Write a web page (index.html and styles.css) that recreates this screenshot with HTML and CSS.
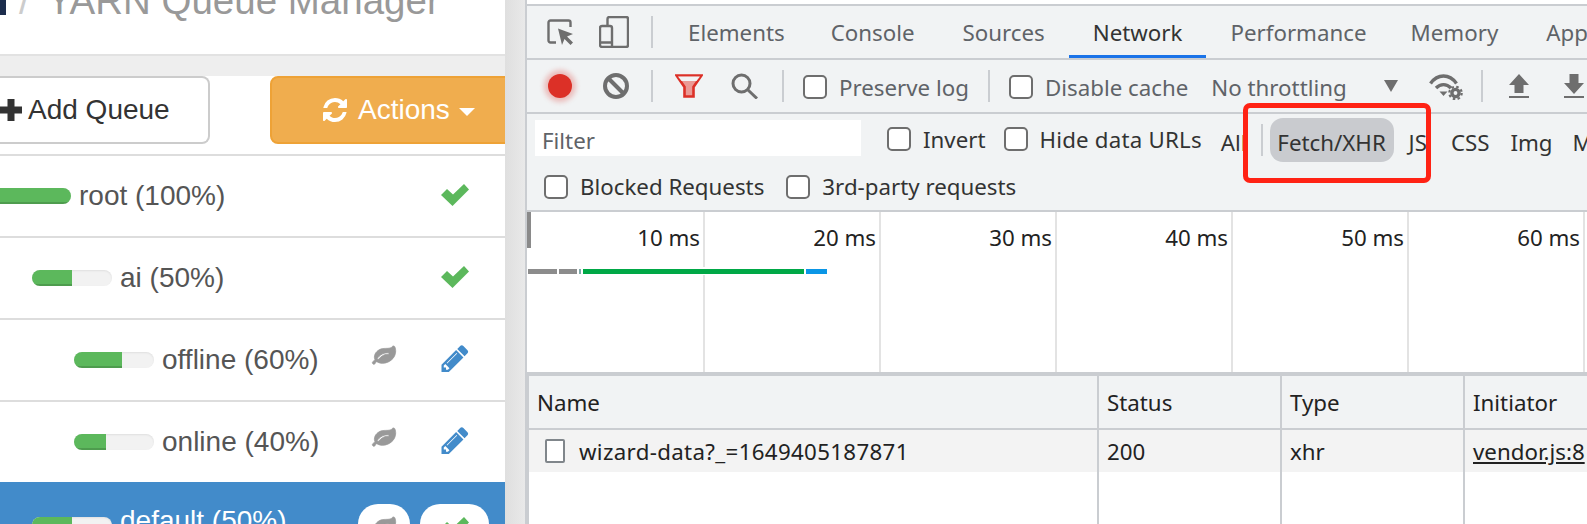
FILE: index.html
```html
<!DOCTYPE html>
<html lang="en">
<head>
<meta charset="utf-8">
<title>YARN Queue Manager</title>
<link rel="stylesheet" href="styles.css">
</head>
<body>
<div class="app">
  <section class="left">
    <header class="crumb"><span class="crumb-logo"></span><span class="crumb-sep">/</span><span class="crumb-title">YARN Queue Manager</span></header>
    <div class="band"></div>
    <div class="btns">
      <button class="btn btn-add"><svg class="plus" viewBox="0 0 22 22"><path d="M7.500 0h7v7.500h7.500v7h-7.500v7.500h-7v-7.500h-7.500v-7h7.500z"/></svg>Add Queue</button>
      <button class="btn btn-act"><svg class="refresh" viewBox="128 128 1536 1536"><path d="M1639 1056q0 5-1 7-64 268-268 434.500t-478 166.500q-146 0-282.500-55t-243.500-157l-129 129q-19 19-45 19t-45-19-19-45v-448q0-26 19-45t45-19h448q26 0 45 19t19 45-19 45l-137 137q71 66 161 102t187 36q134 0 250-65t186-179q11-17 53-117 8-23 30-23h192q13 0 22.500 9.500t9.500 22.500zm25-800v448q0 26-19 45t-45 19h-448q-26 0-45-19t-19-45 19-45l138-138q-148-137-349-137-134 0-250 65t-186 179q-11 17-53 117-8 23-30 23h-199q-13 0-22.500-9.500t-9.500-22.500v-7q65-268 270-434.500t480-166.500q146 0 284 55.500t245 156.500l130-129q19-19 45-19t45 19 19 45z"/></svg>Actions<span class="caret"></span></button>
    </div>
    <ul class="queues">
      <li class="q d0"><span class="bar"><span class="fill" style="width:100%"></span></span><span class="qname">root (100%)</span><span class="qicons"><svg class="ok" viewBox="0 0 28 22"><path d="M0 11l6-6 6 5.500L23 0l5 5.500L11.500 22z"/></svg></span></li>
      <li class="q d1"><span class="bar"><span class="fill" style="width:50%"></span></span><span class="qname">ai (50%)</span><span class="qicons"><svg class="ok" viewBox="0 0 28 22"><path d="M0 11l6-6 6 5.500L23 0l5 5.500L11.500 22z"/></svg></span></li>
      <li class="q d2"><span class="bar"><span class="fill" style="width:60%"></span></span><span class="qname">offline (60%)</span><span class="qicons"><svg class="leaf" viewBox="0 128 1792 1536"><use href="#leaf-p"/></svg><svg class="pen" viewBox="128 128 1536 1536"><use href="#pen-p"/></svg></span></li>
      <li class="q d2"><span class="bar"><span class="fill" style="width:40%"></span></span><span class="qname">online (40%)</span><span class="qicons"><svg class="leaf" viewBox="0 128 1792 1536"><use href="#leaf-p"/></svg><svg class="pen" viewBox="128 128 1536 1536"><use href="#pen-p"/></svg></span></li>
      <li class="q d1 sel"><span class="bar"><span class="fill" style="width:50%"></span></span><span class="qname">default (50%)</span><span class="qicons"><span class="pill pill-a"><svg class="leaf" viewBox="0 128 1792 1536"><use href="#leaf-p"/></svg></span><span class="pill pill-b"><svg class="ok" viewBox="0 0 28 22"><path d="M0 11l6-6 6 5.500L23 0l5 5.500L11.500 22z"/></svg></span></span></li>
    </ul>
  </section>
  <div class="gutter"></div>
  <section class="dt">
    <div class="tabs">
      <svg class="i-inspect" viewBox="0 0 26 26"><path d="M9 23.500H3.500a2 2 0 0 1-2-2V3.500a2 2 0 0 1 2-2h18a2 2 0 0 1 2 2V8" fill="none" stroke="#6e6e6e" stroke-width="2.400"/><path d="M11 9.500l15 5.500-6 2.500 6 6-2.500 2.500-6-6-2.500 6z" fill="#6e6e6e"/></svg>
      <svg class="i-device" viewBox="0 0 30 32"><path d="M8.500 10V3a2 2 0 0 1 2-2H27a2 2 0 0 1 2 2v26a2 2 0 0 1-2 2H3a2 2 0 0 1-2-2V12a2 2 0 0 1 2-2h8a2 2 0 0 1 2 2v19M1 26.500h12" fill="none" stroke="#6e6e6e" stroke-width="2.400"/></svg>
      <span class="sep sep-a"></span>
      <span class="tab tab-first">Elements</span>
      <span class="tab">Console</span>
      <span class="tab">Sources</span>
      <span class="tab tab-on">Network</span>
      <span class="tab tab-perf">Performance</span>
      <span class="tab">Memory</span>
      <span class="tab">Application</span>
    </div>
    <div class="tools">
      <span class="rec"></span>
      <svg class="i-block" viewBox="0 0 26 26"><circle cx="13" cy="13" r="11" fill="none" stroke="#6e6e6e" stroke-width="4"/><path d="M5.500 5.500l15 15" stroke="#6e6e6e" stroke-width="4"/></svg>
      <span class="sep sep-b"></span>
      <svg class="i-funnel" viewBox="0 0 28 24"><path d="M1.500 1.500h25L18.500 13v9.500h-9V13z" fill="#ea9a95" stroke="#dc3027" stroke-width="2.600"/><path d="M3 2.500h22L21.500 7h-15z" fill="#f1f3f4"/></svg>
      <svg class="i-search" viewBox="0 0 27 26"><circle cx="10.500" cy="10.500" r="8.500" fill="none" stroke="#6e6e6e" stroke-width="3"/><path d="M16.500 16.500L26 25.500" stroke="#6e6e6e" stroke-width="3"/></svg>
      <span class="sep sep-c"></span>
      <label class="chk chk-pl"><span class="box"></span>Preserve log</label>
      <span class="sep sep-d"></span>
      <label class="chk chk-dc"><span class="box"></span>Disable cache</label>
      <span class="throttle">No throttling</span>
      <span class="tri"></span>
      <svg class="i-wifi" viewBox="0 0 34 27"><path d="M1.500 10.500C8.500 .5 20.500 .5 27.500 10.500" fill="none" stroke="#6e6e6e" stroke-width="3.400"/><path d="M7 15c4.500-4.500 10.500-4.500 15 0" fill="none" stroke="#6e6e6e" stroke-width="3.400"/><path d="M10.500 18.500h8l-4 4.500z" fill="#6e6e6e"/><circle cx="26.500" cy="20" r="3.600" fill="none" stroke="#6e6e6e" stroke-width="3.400"/><circle cx="26.500" cy="20" r="6.200" fill="none" stroke="#6e6e6e" stroke-width="2.200" stroke-dasharray="2.500 2.370"/></svg>
      <span class="sep sep-e"></span>
      <svg class="i-up" viewBox="0 0 20 24"><path d="M10 0l10 11h-5.500v8h-9v-8H0zM0 22h20v2H0z" fill="#6e6e6e"/></svg>
      <svg class="i-down" viewBox="0 0 20 24"><path d="M5.500 0h9v9H20L10 20 0 9h5.500zM0 22h20v2H0z" fill="#6e6e6e"/></svg>
    </div>
    <div class="filters">
      <div class="f-row f-row-a">
        <span class="f-input">Filter</span>
        <label class="chk dark chk-inv"><span class="box"></span>Invert</label>
        <label class="chk dark chk-hd"><span class="box"></span>Hide data URLs</label>
        <span class="ft ft-all">All</span>
        <span class="sep sep-f"></span>
        <span class="ft ft-on">Fetch/XHR</span>
        <span class="ft ft-js">JS</span>
        <span class="ft ft-css">CSS</span>
        <span class="ft ft-img">Img</span>
        <span class="ft ft-m">Media</span>
      </div>
      <div class="f-row f-row-b">
        <label class="chk dark chk-br"><span class="box"></span>Blocked Requests</label>
        <label class="chk dark chk-3p"><span class="box"></span>3rd-party requests</label>
      </div>
    </div>
    <div class="timeline">
      <div class="tick"><span>10 ms</span></div>
      <div class="tick"><span>20 ms</span></div>
      <div class="tick"><span>30 ms</span></div>
      <div class="tick"><span>40 ms</span></div>
      <div class="tick"><span>50 ms</span></div>
      <div class="tick"><span>60 ms</span></div>
      <span class="handle"></span>
      <div class="wf"><i class="w1"></i><i class="w2"></i><i class="w3"></i><i class="w4"></i><i class="w5"></i></div>
    </div>
    <div class="net">
      <div class="c h">Name</div><div class="c h">Status</div><div class="c h">Type</div><div class="c h">Initiator</div>
      <div class="c r"><span class="doc"></span><span class="wiz">wizard-data?_=1649405187871</span></div><div class="c r">200</div><div class="c r">xhr</div><div class="c r"><span class="link">vendor.js:8</span></div>
      <div class="c e"></div><div class="c e"></div><div class="c e"></div><div class="c e"></div>
    </div>
    <div class="mark"></div>
  </section>
</div>
<svg class="defs" width="0" height="0"><defs>
  <path id="leaf-p" d="M1280 704q0-26-19-45t-45-19q-172 0-318 49.500t-259.500 134-235.500 219.500q-19 21-19 45 0 26 19 45t45 19q24 0 45-19 27-24 74-74t67-71q137-124 268.500-176t313.500-52q26 0 45-19t19-45zm512-198q0 95-20 193-46 224-184.500 383t-357.500 268q-214 108-438 108-148 0-286-47-15-5-88-42t-96-37q-16 0-39.500 32t-45 70-52.500 70-60 32q-43 0-63.500-17.500t-45.500-59.500q-2-4-6-11t-5.500-10-3-9.500-1.500-13.500q0-35 31-73.500t68-65.500 68-56 31-48q0-4-14-38t-16-44q-9-51-9-104 0-115 43.500-220t119-184.500 170.500-139 204-95.500q55-18 145-25.500t179.500-9 178.500-6 163.500-24 113.500-56.500l29.500-29.500 29.500-28 27-20 36.500-16 43.500-4.500q39 0 70.500 46t47.500 112 24 124 8 96z"/>
  <path id="pen-p" d="M491 1536l91-91-235-235-91 91v107h128v128h107zm523-928q0-22-22-22-10 0-17 7l-542 542q-7 7-7 17 0 22 22 22 10 0 17-7l542-542q7-7 7-17zm-54-192l416 416-832 832h-416v-416zm683 96q0 53-37 90l-166 166-416-416 166-165q36-38 90-38 53 0 91 38l235 234q37 39 37 91z"/>
</defs></svg>
</body>
</html>
```
FILE: styles.css
```css
* { box-sizing: border-box; }
html, body { margin: 0; height: 524px; overflow: hidden; background: #fff; }
.app { display: flex; width: 1587px; height: 524px; overflow: hidden; }
.defs { display: block; height: 0; }

/* left panel */
.left { width: 505px; flex: none; height: 524px; overflow: hidden; font-family: "Liberation Sans", Arial, sans-serif; color: #555; background: #fff; }
.crumb { height: 54px; display: flex; align-items: flex-start; overflow: hidden; font-size: 38.500px; line-height: 38px; color: #999; }
.crumb-logo { width: 6px; height: 15px; background: #1c2d4d; flex: none; }
.crumb-sep { color: #ccc; margin: -18px 0 0 13px; }
.crumb-title { margin: -18px 0 0 17px; white-space: nowrap; }
.band { height: 22px; background: #eee; border-top: 2px solid #e2e2e2; }
.btns { display: flex; height: 78px; align-items: flex-start; overflow: hidden; }
.btn { height: 68px; font: 28px "Liberation Sans", Arial, sans-serif; border-radius: 8px; display: flex; align-items: center; padding: 0; flex: none; }
.btn-add { width: 210px; margin-left: 0; background: #fff; border: 2px solid #ccc; color: #333; border-left: 0; border-radius: 0 8px 8px 0; }
.plus { width: 22px; height: 22px; fill: #333; margin-right: 6px; flex: none; }
.btn-act { width: 280px; margin-left: 60px; background: #f0ad4e; border: 2px solid #eea236; color: #fff; padding-left: 50px; }
.refresh { width: 26px; height: 24px; fill: #fff; margin-right: 10px; flex: none; }
.caret { width: 0; height: 0; border: 8px solid transparent; border-top-color: #fff; border-bottom: 0; margin-left: 9px; margin-top: 4px; }
.queues { list-style: none; margin: 0; padding: 0; }
.q { display: flex; align-items: center; height: 82px; border-top: 2px solid #ddd; position: relative; font-size: 28px; white-space: nowrap; }
.d0 { padding-left: 0; margin-left: -9px; }
.d1 { padding-left: 32px; }
.d2 { padding-left: 74px; }
.bar { width: 80px; height: 16px; border-radius: 8px; background: #f2f2f2; overflow: hidden; display: block; flex: none; margin-top: -1px; box-shadow: inset 0 1px 2px rgba(0,0,0,.08); }
.fill { display: block; height: 100%; background: #5cb85c; box-shadow: inset 0 -2px 0 rgba(0,0,0,.15); }
.qname { margin-left: 8px; margin-top: -1px; }
.qicons { position: absolute; right: 36px; top: 0; bottom: 0; display: flex; align-items: center; gap: 45px; }
.ok { width: 28px; height: 22px; fill: #5cb85c; display: block; margin-top: -2px; }
.leaf { width: 24px; height: 20px; fill: #999; stroke: #999; stroke-width: 60; display: block; margin-top: -8px; overflow: visible; }
.pen { width: 28px; height: 27px; fill: #428bca; display: block; margin-top: -3px; }
.sel { background: #428bca; color: #fff; border-top: 0; height: 60px; align-items: flex-start; }
.sel .bar { margin-top: 35px; }
.sel .qname { margin-top: 23px; }
.sel .qicons { align-items: flex-start; right: 16px; gap: 10px; }
.pill { margin-top: 22px; height: 60px; background: #fff; border-radius: 20px; display: flex; justify-content: center; flex: none; }
.pill-a { width: 52px; padding-top: 13px; }
.pill-b { width: 69px; padding-top: 13px; }
.pill .ok, .pill .leaf { margin-top: 0; }

.gutter { width: 20px; flex: none; background: linear-gradient(90deg, #dfdfdf, #e9e9e9); }

/* devtools */
.dt { flex: 1; min-width: 0; height: 524px; position: relative; overflow: hidden; background: #fff; border-left: 2px solid #cacdd1; font: 22.300px "Noto Sans", "Open Sans", sans-serif; color: #222; }
.sep { display: block; width: 2px; height: 32px; background: #cacdd1; flex: none; }
.tabs { height: 56px; margin-top: 4px; display: flex; align-items: center; background: #f1f3f4; border-top: 2px solid #cacdd1; border-bottom: 2px solid #cacdd1; white-space: nowrap; position: relative; }
.i-inspect { width: 26px; height: 26px; margin-left: 20px; flex: none; }
.i-device { width: 30px; height: 32px; margin-left: 26px; flex: none; }
.sep-a { margin-left: 22px; }
.tab { color: #5f6368; padding: 0 24px; height: 52px; line-height: 54px; flex: none; }
.tab-first { margin-left: 11px; padding-right: 22px; }
.tab-perf { padding-right: 20px; }
.tab-on { color: #333; box-shadow: inset 0 -3px 0 #1a73e8; position: relative; }
.tools { height: 54px; display: flex; align-items: center; background: #f1f3f4; border-bottom: 2px solid #cacdd1; white-space: nowrap; color: #5f6368; }
.rec { width: 24px; height: 24px; border-radius: 50%; background: #dc3027; box-shadow: 0 0 5px 4px rgba(220,48,39,.28); margin-left: 21px; flex: none; }
.i-block { width: 26px; height: 26px; margin-left: 31px; flex: none; }
.sep-b { margin-left: 22px; }
.i-funnel { width: 28px; height: 24px; margin-left: 22px; flex: none; }
.i-search { width: 27px; height: 26px; margin-left: 28px; flex: none; }
.sep-c { margin-left: 24px; }
.chk { display: flex; align-items: center; flex: none; }
.box { width: 24px; height: 24px; border: 2px solid #6e6e6e; border-radius: 5px; background: #fff; margin-right: 12px; flex: none; }
.tools .chk, .throttle { padding-top: 2px; }
.chk-pl { margin-left: 19px; }
.sep-d { margin-left: 19px; }
.chk-dc { margin-left: 19px; }
.throttle { margin-left: 23px; }
.tri { width: 0; height: 0; border: 7px solid transparent; border-top: 12px solid #6e6e6e; border-bottom: 0; margin-left: 37px; flex: none; }
.i-wifi { width: 34px; height: 27px; margin-left: 31px; flex: none; }
.sep-e { margin-left: 18px; }
.i-up { width: 20px; height: 24px; margin-left: 26px; flex: none; }
.i-down { width: 20px; height: 24px; margin-left: 35px; flex: none; }
.filters { height: 98px; background: #f1f3f4; border-bottom: 2px solid #cacdd1; padding-top: 4px; white-space: nowrap; }
.f-row { display: flex; align-items: center; }
.f-row-a { height: 44px; }
.f-row-b { height: 48px; padding-top: 1px; }
.f-input { width: 326px; height: 36px; line-height: 42px; background: #fff; margin: 0 0 4px 8px; padding-left: 7px; color: #5f6368; flex: none; }
.dark { color: #333; }
.chk-inv { margin: 0 0 2px 26px; }
.chk-hd { margin: 0 0 2px 18px; letter-spacing: .2px; }
.ft { color: #333; flex: none; margin-top: 4px; }
.ft-all { margin-left: 19px; }
.sep-f { margin-left: 14px; }
.ft-on { margin: 0 0 0 7px; width: 124px; height: 44px; line-height: 49px; text-align: center; background: #c9cbcf; border-radius: 13px; }
.ft-js { margin-left: 15px; }
.ft-css { margin-left: 24px; }
.ft-img { margin-left: 21px; }
.ft-m { margin-left: 20px; }
.chk-br { margin-left: 17px; }
.chk-3p { margin-left: 22px; }

.timeline { height: 164px; display: flex; position: relative; border-bottom: 4px solid #cacdd1; background: #fff; overflow: hidden; }
.tick { width: 176px; flex: none; height: 100%; border-right: 2px solid #e3e3e3; text-align: right; padding: 8px 3px 0 0; line-height: 36px; color: #222; }
.tick:first-child { width: 178px; }
.handle { position: absolute; left: 0; top: 0; width: 4px; height: 36px; background: #8a8a8a; }
.wf { position: absolute; left: 0; top: 55px; height: 8px; width: 300px; padding: 1.500px 0; display: flex; background: #fff; }
.wf i { display: block; height: 5px; flex: none; }
.w1 { width: 29px; background: #8c8c8c; margin-left: 1px; }
.w2 { width: 18px; background: #8c8c8c; margin-left: 2px; }
.w3 { width: 2px; background: #7fa8a8; margin-left: 2px; }
.w4 { width: 221px; background: #00a846; margin-left: 2px; }
.w5 { width: 21px; background: #0a96e6; margin-left: 2px; }
.net { display: grid; grid-template-columns: 570px 183px 183px 1fr; grid-template-rows: 54px 42px 1fr; height: 148px; border-left: 2px solid #cacdd1; line-height: 1; white-space: nowrap; }
.c { display: flex; align-items: center; padding-left: 8px; border-right: 2px solid #cacdd1; color: #222; overflow: hidden; }
.c:nth-child(4n) { border-right: 0; }
.h { background: #f1f3f4; border-bottom: 2px solid #cacdd1; padding-top: 3px; }
.r { background: #f3f3f3; padding-top: 2px; }
.wiz { letter-spacing: .33px; }
.doc { width: 20px; height: 24px; border: 2px solid #80868b; border-radius: 2px; background: #fff; margin: -2px 14px 0 8px; flex: none; }
.link { text-decoration: underline; color: #222; }
.mark { position: absolute; left: 716px; top: 103px; width: 188px; height: 80px; border: 5px solid #ff2214; border-radius: 7px; }
```
